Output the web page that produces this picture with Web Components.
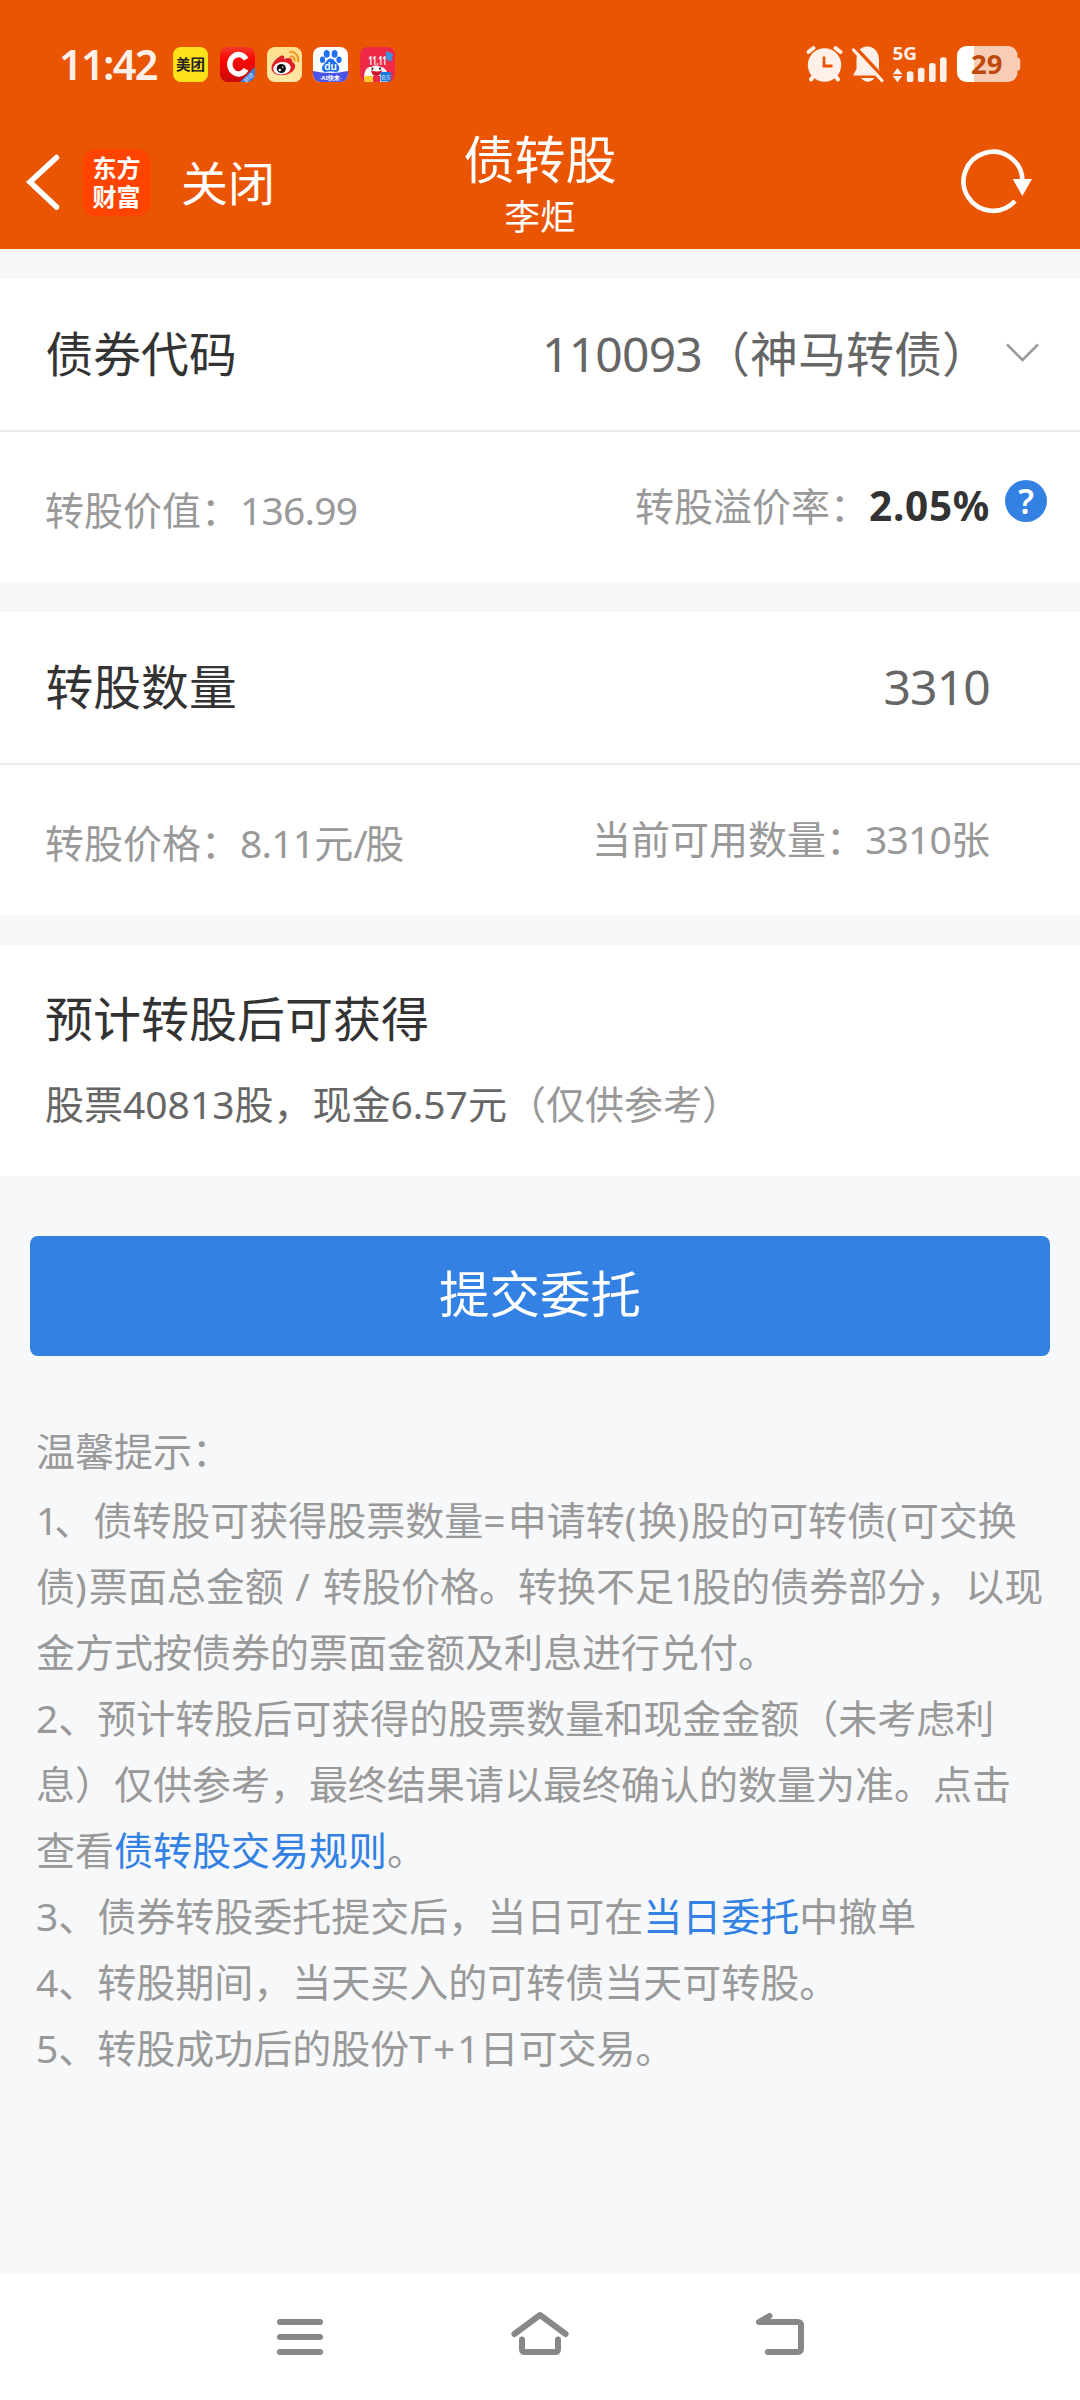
<!DOCTYPE html>
<html lang="zh-CN">
<head>
<meta charset="utf-8">
<title>债转股</title>
<style>
html,body{margin:0;padding:0}
body{width:1080px;height:2400px;overflow:hidden;background:#f7f8fa;font-family:"Noto Sans","Noto Sans CJK SC",sans-serif;color:#333;font-kerning:none}
</style>
</head>
<body>
<bond-screen></bond-screen>
<script>
const define = (name, html) => {
  const t = document.createElement('template');
  t.innerHTML = '<style>*{box-sizing:border-box}svg{display:block;flex:none;overflow:visible}</style>' + html;
  customElements.define(name, class extends HTMLElement {
    constructor() {
      super();
      this.attachShadow({ mode: 'open' }).appendChild(t.content.cloneNode(true));
    }
  });
};

define('status-bar', `
<style>
:host{display:flex;height:128px;padding:0 59px 0 59px;align-items:center;color:#fff1e9}
.time{width:114px;font:600 41.5px/56px "Noto Sans",sans-serif;letter-spacing:-1.7px;white-space:nowrap;margin-top:-1px}
.apps{display:flex;gap:11.8px}
.sp{flex:1}
text{font-family:"Noto Sans","Noto Sans CJK SC",sans-serif}
</style>
<div class="time">11:42</div>
<div class="apps">
<svg width="35" height="35" viewBox="0 0 35 35"><rect width="35" height="35" rx="8" fill="#ffe11a"/><text x="17.5" y="23" font-size="14.5" font-weight="700" text-anchor="middle" fill="#222">美团</text></svg>
<svg width="35" height="35" viewBox="0 0 35 35"><defs><clipPath id="c"><rect width="35" height="35" rx="8"/></clipPath><linearGradient id="g" x2="0" y2="1"><stop stop-color="#f1382b"/><stop offset=".35" stop-color="#fb0806"/><stop offset="1" stop-color="#c90a0a"/></linearGradient></defs><g clip-path="url(#c)"><rect width="35" height="35" fill="url(#g)"/><path d="M35 20V35H20Z" fill="#3b7fe0"/></g><path d="M26 12.300A8.700 9.700 0 1 0 26 22.200" fill="none" stroke="#fff" stroke-width="5.400"/><g transform="translate(29.5 31.5) rotate(-45)"><text y="1" font-size="5.5" fill="#dcebff" text-anchor="middle">财经</text></g></svg>
<svg width="35" height="35" viewBox="0 0 35 35"><defs><linearGradient id="w" x2="0" y2="1"><stop stop-color="#ffdf8d"/><stop offset="1" stop-color="#ffe7a8"/></linearGradient></defs><rect width="35" height="35" rx="8" fill="url(#w)"/><path d="M12 10c4-3 6-1 5 2 5-2 9-1 8 3 4 1 4 6 1 9-5 5-16 6-20 1C2 20 7 13 12 10Z" fill="#df2029"/><ellipse cx="15" cy="21.2" rx="8.8" ry="6.2" transform="rotate(-8 15 21.2)" fill="#fff"/><circle cx="14.3" cy="21.5" r="4.6" fill="#111"/><circle cx="12.8" cy="23" r="1.3" fill="#fff"/><circle cx="15.8" cy="20.3" r=".8" fill="#fff"/><path d="M23 5c5-1 9 4 8 9M23.5 9.500c3-.5 4.500 2 4 4" fill="none" stroke="#f39a26" stroke-width="2.200" stroke-linecap="round"/></svg>
<svg width="35" height="35" viewBox="0 0 35 35"><defs><clipPath id="b"><rect width="35" height="35" rx="8"/></clipPath></defs><g clip-path="url(#b)"><rect width="35" height="35" fill="#fff"/><path d="M0 24Q17.500 28 35 24V35H0Z" fill="#4a52e8"/></g><g fill="#2272f0"><ellipse cx="13.700" cy="6.800" rx="3" ry="3.900"/><ellipse cx="21.600" cy="6.800" rx="3" ry="3.900"/><ellipse cx="9.500" cy="12.800" rx="2.600" ry="3.300"/><ellipse cx="26" cy="12.800" rx="2.600" ry="3.300"/><path d="M17.700 11.500c3 0 4 3 6.500 5.200 4 4 1.800 8.600-1.500 8.300-3.500-.6-6.500-.6-10 0-3.500.3-5.600-4.300-1.500-8.300C13.700 14.500 14.700 11.500 17.700 11.500Z"/></g><text x="17.600" y="23.200" font-size="10" font-weight="600" fill="#fff" text-anchor="middle">du</text><text x="17.500" y="32.700" font-size="6" font-weight="700" fill="#fff" text-anchor="middle">·AI快末·</text></svg>
<svg width="35" height="35" viewBox="0 0 35 35"><defs><clipPath id="t"><rect width="35" height="35" rx="8"/></clipPath></defs><g clip-path="url(#t)"><rect width="35" height="35" fill="#ee2a48"/><path d="M26 4l7 3-2 8-5-3Z" fill="#3a91dd"/><path d="M4 30Q5 19 11 20Q16 17 21 20Q27 20 28 31V35H4Z" fill="#fff"/><path d="M11 23q6 3 11 0q-1 6-6 6q-4 0-5-6" fill="#cf1729"/><circle cx="12.500" cy="21.700" r="1.100" fill="#222"/><circle cx="20" cy="21.700" r="1.100" fill="#222"/><rect x="4" y="29" width="9" height="6" rx="2" fill="#ffc928"/><rect x="13" y="29" width="7" height="6" fill="#ee2a48"/><rect x="20.500" y="25" width="10.500" height="9.500" rx="1" fill="#1879dd"/></g><text x="17.500" y="18" font-size="12" font-weight="700" fill="#fff" text-anchor="middle" textLength="18" lengthAdjust="spacingAndGlyphs">11.11</text><text x="25.700" y="31.500" font-size="4.800" fill="#fff" text-anchor="middle">官方</text></svg>
</div>
<div class="sp"></div>
<svg width="215" height="38" viewBox="806 45 215 38">
<g fill="#fff1e9"><circle cx="824.500" cy="65" r="16.700"/><g stroke="#fff1e9" stroke-width="4" stroke-linecap="round"><path d="M808.500 52l5-4M840.500 52l-5-4M811 79.500l3-4M838 79.500l-3-4"/></g><path d="M824 56.500V66h8.500" fill="none" stroke="#ea5504" stroke-width="2.800"/>
<path d="M853 75.500h29l-3-6.500V60c0-7-4-13.500-11.500-13.500S856.500 52 856.500 60v9ZM861 78h13.500q-6.700 7.500-13.500 0Z"/><path d="M855 47l29 31" stroke="#ea5504" stroke-width="3.500"/><path d="M853.500 50l28.500 30.500" stroke="#fff1e9" stroke-width="3.200" stroke-linecap="round"/>
<text x="892.500" y="60" font-size="18" font-weight="700" textLength="24.500" lengthAdjust="spacingAndGlyphs">5G</text>
<path d="M897.500 68l4.800 6.300h-9.600ZM897.500 82.300l4.800-6.300h-9.600Z"/><rect x="906.800" y="71.300" width="6.600" height="10.700" rx="2.600"/><rect x="917.900" y="67.700" width="6.600" height="14.300" rx="2.600"/><rect x="929" y="63" width="6.600" height="19" rx="2.600"/><rect x="940" y="57.300" width="6.600" height="24.700" rx="2.600"/></g>
<path d="M974 46h34a9.500 9.500 0 0 1 9.500 9.500v2.200q2.700 0 2.700 2.800v7.500q0 2.800-2.700 2.800v1.700a9.500 9.500 0 0 1-9.500 9.500h-34Z" fill="#f9cdb5"/><path d="M974 46v36h-7.500a9.500 9.500 0 0 1-9.500-9.500v-17a9.500 9.500 0 0 1 9.500-9.500Z" fill="#fff"/><text x="986.700" y="73.900" font-size="27.500" font-weight="700" fill="#bd4a0c" text-anchor="middle">29</text>
</svg>`);

define('title-bar', `
<style>
:host{display:grid;grid-template-columns:1fr 200px 1fr;height:121px;color:#fff;padding-bottom:15px}
.l{display:flex;align-items:center;padding:0 0 4px 25px}
.logo{width:67px;height:67px;margin:1px 0 0 22px;border-radius:13px;background:#ff4400;text-align:center;font:700 24px/29px "Liberation Sans","Noto Sans CJK SC",sans-serif;padding-top:5px}
.close{margin:1px 0 0 31px;font-size:47px;line-height:60px}
.m{display:flex;flex-direction:column;align-items:center}
.t{font-size:51px;line-height:60px;margin-top:1px}
.s{font-size:35.500px;line-height:48px;margin-top:3px}
.r{display:flex;justify-content:flex-end;align-items:center;padding:0 45px 4px 0}
</style>
<div class="l"><svg width="36" height="60" viewBox="25 151 36 60"><path d="M56.500 156.500L30 181l26.500 25" fill="none" stroke="#fff" stroke-width="5.500" stroke-linecap="round"/></svg><div class="logo">东方<br>财富</div><div class="close">关闭</div></div>
<div class="m"><div class="t">债转股</div><div class="s">李炬</div></div>
<div class="r"><svg width="75" height="66" viewBox="960 148 75 66"><path d="M1015 200A29.500 29.500 0 1 1 1022.500 179" fill="none" stroke="#fff" stroke-width="4.600"/><path d="M1012.700 178H1032l-9.700 17Z" fill="#fff"/></svg></div>`);

define('page-header', `
<style>:host{display:block;height:249px;background:#ea5504}</style>
<status-bar></status-bar><title-bar></title-bar>`);

define('form-card', `
<style>:host{display:block;background:#fff;margin-top:30px}</style><slot></slot>`);

define('form-row', `
<style>
:host{display:flex;justify-content:space-between;height:153px;padding:0 90px 2px 45.500px;align-items:center;font-size:47.800px;line-height:72px;white-space:nowrap;border-bottom:2px solid #ececed}
.v{color:#666;display:flex;align-items:center;font-size:48px}
::slotted(svg){display:block;margin-right:-50px}
</style>
<slot name="label"></slot><div class="v"><slot></slot></div>`);

define('info-row', `
<style>
:host{display:flex;justify-content:space-between;height:150px;padding:0 90px 1px 45px;align-items:center;font-size:39px;line-height:58px;color:#999;white-space:nowrap}
.l{margin-top:6px}.r{display:flex;align-items:center;margin-top:-1px}
</style>
<div class="l"><slot name="left"></slot></div><div class="r"><slot></slot></div>`);

define('result-card', `
<style>
:host{display:block;background:#fff;margin-top:30px;height:231px;padding:38px 45px 0;white-space:nowrap}
.h{font-size:48px;line-height:72px}
.d{font-size:39px;line-height:58px;color:#666;margin-top:20px}
</style><div class="h"><slot name="title"></slot></div><div class="d"><slot></slot></div>`);

define('submit-button', `
<style>
:host{display:block;margin:60px 30px 0}
button{display:block;width:100%;height:120px;padding:0 0 10px;border:0;border-radius:8px;background:#3381e3;color:#fff;font:400 50.500px/72px "Noto Sans CJK SC",sans-serif}
</style><button><slot></slot></button>`);

define('tips-list', `
<style>
:host{display:block;margin:62px 0 0;padding:0 36px;font-size:39px;line-height:66px;color:#999;white-space:nowrap}
.h{margin-bottom:3px}
</style><div class="h"><slot name="title"></slot></div><slot></slot>`);

define('tip-item', `<style>:host{display:block}</style><slot></slot>`);
define('tip-link', `<style>:host{color:#3381e3}</style><slot></slot>`);

define('nav-bar', `
<style>:host{display:flex;height:126px;background:#fff;margin-top:auto;padding:32px 270px 0;justify-content:space-between}</style>
<svg width="60" height="60" viewBox="270 2306 60 60"><path d="M280 2322h40M280 2337h40M280 2352h40" stroke="#888" stroke-width="6" stroke-linecap="round"/></svg>
<svg width="60" height="60" viewBox="510 2306 60 60"><g fill="none" stroke="#888" stroke-width="6" stroke-linecap="round" stroke-linejoin="round"><path d="M514.400 2334L540 2315l25.600 19M522 2339.500V2349q0 3 3 3h30q3 0 3-3v-9.500"/></g></svg>
<svg width="60" height="60" viewBox="750 2306 60 60"><g fill="none" stroke="#888" stroke-width="6" stroke-linecap="round" stroke-linejoin="round"><path d="M769.500 2316L759 2322H797.500q3.500 0 3.500 3.500V2348.500q0 3.500-3.500 3.500H768"/></g></svg>`);

define('bond-screen', `
<style>
:host{display:flex;flex-direction:column;height:2400px;width:1080px;background:#f7f8fa}
.n{letter-spacing:-.8px}.o{margin-right:-4px}.w{letter-spacing:2px}b{color:#333;font-weight:700;font-size:40.500px;line-height:1;letter-spacing:.7px}
.q{margin:-11px -57px 0 15px}
i{font-style:normal;color:#999}
text{font-family:"Noto Sans",sans-serif}
</style>
<page-header></page-header>
<form-card>
<form-row><span slot="label">债券代码</span><span><span class="n">110093</span>（神马转债）</span><svg width="36" height="24" viewBox="0 0 36 24" style="margin-left:14px"><path d="M3 2.500L18.500 18L34 2.500" fill="none" stroke="#999" stroke-width="2.500"/></svg></form-row>
<info-row><span slot="left">转股价值：<span class="n">136.99</span></span><span>转股溢价率：<b>2.05%</b></span><svg class="q" width="42" height="42" viewBox="0 0 42 42"><circle cx="21" cy="21" r="21" fill="#3381e3"/><text x="21" y="33.500" font-size="34" font-weight="600" fill="#fff" text-anchor="middle">?</text></svg></info-row>
</form-card>
<form-card>
<form-row><span slot="label">转股数量</span><span class="n">3310</span></form-row>
<info-row><span slot="left">转股价格：<span class="n">8.11</span>元<span style="letter-spacing:-2.500px">/</span>股</span><span>当前可用数量：<span class="n">3310</span>张</span></info-row>
</form-card>
<result-card><span slot="title">预计转股后可获得</span>股票40813股，现金6.57元<i>（仅供参考）</i></result-card>
<submit-button>提交委托</submit-button>
<tips-list><span slot="title">温馨提示：</span>
<tip-item><span class="o">1</span>、债转股可获得股票数量<span class="w">=</span>申请转<span class="w">(</span>换<span class="w">)</span>股的可转债<span class="w">(</span>可交换</tip-item>
<tip-item>债<span class="w">)</span>票面总金额<span style="letter-spacing:1.500px"> / </span>转股价格。转换不足<span class="o">1</span>股的债券部分，以现</tip-item>
<tip-item>金方式按债券的票面金额及利息进行兑付。</tip-item>
<tip-item>2、预计转股后可获得的股票数量和现金金额（未考虑利</tip-item>
<tip-item>息）仅供参考，最终结果请以最终确认的数量为准。点击</tip-item>
<tip-item>查看<tip-link>债转股交易规则</tip-link>。</tip-item>
<tip-item>3、债券转股委托提交后，当日可在<tip-link>当日委托</tip-link>中撤单</tip-item>
<tip-item>4、转股期间，当天买入的可转债当天可转股。</tip-item>
<tip-item>5、转股成功后的股份<span class="w">T+</span>1日可交易。</tip-item>
</tips-list>
<nav-bar></nav-bar>`);
</script>
</body>
</html>
